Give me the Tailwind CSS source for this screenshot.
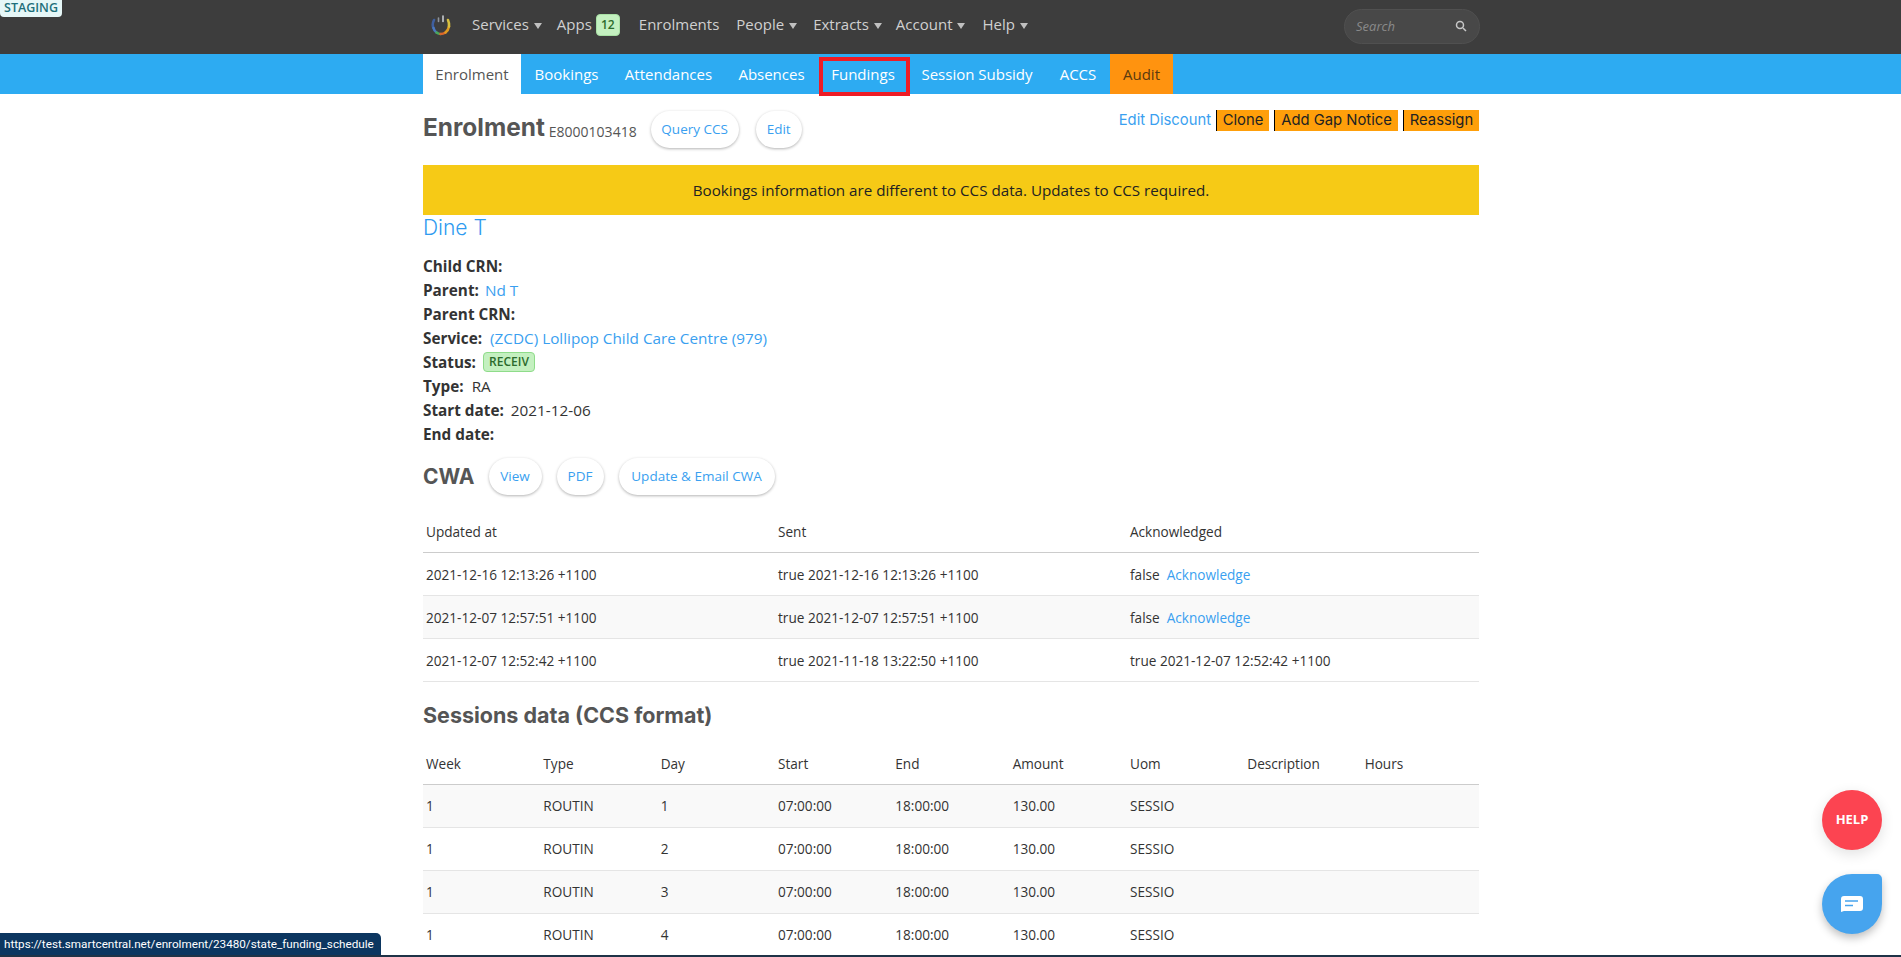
<!DOCTYPE html>
<html lang="en">
<head>
  <meta charset="UTF-8" />
  <title>Enrolment</title>
  <script src="https://cdn.jsdelivr.net/npm/@tailwindcss/browser@4"></script>
</head>
<body class="h-[957px] overflow-hidden bg-white text-[15.3px] text-[#333] font-['Open_Sans',sans-serif]">

  <!-- Top nav -->
  <nav class="h-[54px] bg-[#3d3d3d]">
    <div class="w-[1056px] ml-[423px] h-full flex items-center pb-[5px] text-[15px] text-[#d0d0d0]">
      <svg class="ml-[8px] mr-[21px]" width="20" height="22" viewBox="0 0 20 22" fill="none" stroke-width="2.6" stroke-linecap="round">
        <path d="M3 6 C1.5 9 1.5 12 2.5 14" stroke="#3f5f9f"/>
        <path d="M2.5 14 C3 16 4 17.5 5.5 18.5" stroke="#4a78c0"/>
        <path d="M5.5 18.5 C7 19.6 8 20 9.5 20" stroke="#4aa85a"/>
        <path d="M9.5 20 C11.5 20 13 19.5 14.5 18.5" stroke="#d8662a"/>
        <path d="M14.5 18.5 C16.5 17 17.5 15 18 12.5" stroke="#e09a20"/>
        <path d="M18 12.5 C18.2 10 18 8 17 6" stroke="#d8c040"/>
        <path d="M7.5 4 V7.5" stroke="#8f949b" stroke-width="1.6"/>
        <path d="M12 2 V7.5" stroke="#c8ccd0" stroke-width="1.6"/>
      </svg>
      <a class="flex items-center">Services<svg class="ml-[5px] mt-[2px]" width="8" height="6" viewBox="0 0 8 6" fill="#c0c0c0"><path d="M0 0 H8 L4 6 Z"/></svg></a>
      <a class="ml-[15px]">Apps</a>
      <span class="ml-[4px] w-[24px] h-[22px] flex items-center justify-center rounded-[4px] bg-[#c4f0c0] border border-[#a8e0a4] text-[#2c6b2c] text-[12px] font-semibold">12</span>
      <a class="ml-[19px]">Enrolments</a>
      <a class="ml-[17px] flex items-center">People<svg class="ml-[5px] mt-[2px]" width="8" height="6" viewBox="0 0 8 6" fill="#c0c0c0"><path d="M0 0 H8 L4 6 Z"/></svg></a>
      <a class="ml-[16px] flex items-center">Extracts<svg class="ml-[5px] mt-[2px]" width="8" height="6" viewBox="0 0 8 6" fill="#c0c0c0"><path d="M0 0 H8 L4 6 Z"/></svg></a>
      <a class="ml-[14px] flex items-center">Account<svg class="ml-[5px] mt-[2px]" width="8" height="6" viewBox="0 0 8 6" fill="#c0c0c0"><path d="M0 0 H8 L4 6 Z"/></svg></a>
      <a class="ml-[17px] flex items-center">Help<svg class="ml-[5px] mt-[2px]" width="8" height="6" viewBox="0 0 8 6" fill="#c0c0c0"><path d="M0 0 H8 L4 6 Z"/></svg></a>
      <div class="ml-auto -mr-[1px] w-[136px] h-[35px] mt-[3px] rounded-full bg-[#484848] border border-[#505050] flex items-center justify-between pl-[11px] pr-[12px]">
        <span class="italic text-[13px] text-[#8a8a8a] mt-[1px]">Search</span>
        <svg width="12" height="12" viewBox="0 0 12 12" fill="none" stroke="#c8c8c8" stroke-width="1.5">
          <circle cx="5" cy="5" r="3.5"/><path d="M8 8 L11 11"/>
        </svg>
      </div>
    </div>
  </nav>

  <!-- Sub nav -->
  <div class="h-10 bg-[#2dabf2]">
    <div class="w-[1056px] ml-[423px] h-full flex text-[15px] text-white">
      <a class="w-[98px] flex items-center justify-center bg-white text-[#555]">Enrolment</a>
      <a class="w-[91px] flex items-center justify-center">Bookings</a>
      <a class="w-[113px] flex items-center justify-center">Attendances</a>
      <a class="w-[93px] flex items-center justify-center">Absences</a>
      <a class="w-[90px] flex items-center justify-center">Fundings</a>
      <a class="w-[138px] flex items-center justify-center">Session Subsidy</a>
      <a class="w-[64px] flex items-center justify-center">ACCS</a>
      <a class="w-[63px] flex items-center justify-center bg-[#ff930f] text-[#5a3a10]">Audit</a>
    </div>
  </div>

  <main class="w-[1056px] ml-[423px]">
    <!-- Title row -->
    <div class="h-[71px] flex items-start justify-between">
      <div class="flex items-center mt-[17px]">
        <h1 class="text-[24.4px] leading-[32px] -mt-[5px] font-bold text-[#555] font-['Inter',sans-serif]">Enrolment</h1>
        <span class="ml-[4px] mt-[3px] text-[14px] text-[#555]">E8000103418</span>
        <a class="ml-[14px] h-[37px] w-[88px] flex items-center justify-center rounded-full bg-white shadow-[0_1px_3px_rgba(0,0,0,0.3)] text-[13.5px] text-[#3a9ff0]">Query CCS</a>
        <a class="ml-[17px] h-[37px] w-[46px] flex items-center justify-center rounded-full bg-white shadow-[0_1px_3px_rgba(0,0,0,0.3)] text-[13.5px] text-[#3a9ff0]">Edit</a>
      </div>
      <div class="flex items-center mt-[16px] h-[21px] text-[14.8px] font-['Inter',sans-serif]">
        <a class="text-[#3a9ff0]">Edit Discount</a>
        <a class="ml-[5px] h-full w-[53px] flex items-center justify-center bg-[#ff9f0a] border-l border-black text-[#222]">Clone</a>
        <a class="ml-[5px] h-full w-[124px] flex items-center justify-center bg-[#ff9f0a] border-l border-black text-[#222]">Add Gap Notice</a>
        <a class="ml-[5px] h-full w-[76px] flex items-center justify-center bg-[#ff9f0a] border-l border-black text-[#222]">Reassign</a>
      </div>
    </div>

    <!-- Alert -->
    <div class="h-[50px] bg-[#f6ca16] flex items-center justify-center text-[15.2px] text-[#222]">Bookings information are different to CCS data. Updates to CCS required.</div>

    <a class="block h-[24px] mt-[1px] text-[21px] leading-[24px] font-light text-[#2f9bf0] font-['Inter',sans-serif]">Dine T</a>

    <!-- Details -->
    <div class="mt-[14px] leading-[24px]">
      <div><b class="font-bold">Child CRN:</b></div>
      <div><b class="font-bold">Parent:</b><a class="ml-[6px] text-[#3a9ff0]">Nd T</a></div>
      <div><b class="font-bold">Parent CRN:</b></div>
      <div><b class="font-bold">Service:</b><a class="ml-[8px] text-[#3a9ff0]">(ZCDC) Lollipop Child Care Centre (979)</a></div>
      <div class="flex items-center"><b class="font-bold">Status:</b><span class="ml-[7px] h-[20px] w-[52px] flex items-center justify-center rounded-[4px] bg-[#c4f0c0] border border-[#8fdc8a] text-[#2c6b2c] text-[12px] font-semibold">RECEIV</span></div>
      <div><b class="font-bold">Type:</b><span class="ml-[8px]">RA</span></div>
      <div><b class="font-bold">Start date:</b><span class="ml-[7px]">2021-12-06</span></div>
      <div><b class="font-bold">End date:</b></div>
    </div>

    <!-- CWA -->
    <div class="mt-[12px] h-[37px] flex items-center">
      <h2 class="text-[21px] font-bold text-[#555] font-['Inter',sans-serif]">CWA</h2>
      <a class="ml-[14px] h-[37px] w-[53px] flex items-center justify-center rounded-full bg-white shadow-[0_1px_3px_rgba(0,0,0,0.3)] text-[13.5px] text-[#3a9ff0]">View</a>
      <a class="ml-[15px] h-[37px] w-[47px] flex items-center justify-center rounded-full bg-white shadow-[0_1px_3px_rgba(0,0,0,0.3)] text-[13.5px] text-[#3a9ff0]">PDF</a>
      <a class="ml-[15px] h-[37px] w-[156px] flex items-center justify-center rounded-full bg-white shadow-[0_1px_3px_rgba(0,0,0,0.3)] text-[13.5px] text-[#3a9ff0]">Update &amp; Email CWA</a>
    </div>

    <table class="mt-[14px] w-full table-fixed text-[13.6px] text-left">
      <thead>
        <tr class="h-[43px] border-b border-[#ccc]">
          <th class="px-[3px] pt-[3px] font-medium">Updated at</th><th class="px-[3px] pt-[3px] font-medium">Sent</th><th class="px-[3px] pt-[3px] font-medium">Acknowledged</th>
        </tr>
      </thead>
      <tbody>
        <tr class="h-[43px] border-b border-[#e5e5e5]">
          <td class="px-[3px] pt-[4px]">2021-12-16 12:13:26 +1100</td><td class="px-[3px] pt-[4px]">true 2021-12-16 12:13:26 +1100</td><td class="px-[3px] pt-[4px]">false<a class="ml-[7px] text-[#3a9ff0]">Acknowledge</a></td>
        </tr>
        <tr class="h-[43px] border-b border-[#e5e5e5] bg-[#f9f9f9]">
          <td class="px-[3px] pt-[4px]">2021-12-07 12:57:51 +1100</td><td class="px-[3px] pt-[4px]">true 2021-12-07 12:57:51 +1100</td><td class="px-[3px] pt-[4px]">false<a class="ml-[7px] text-[#3a9ff0]">Acknowledge</a></td>
        </tr>
        <tr class="h-[43px] border-b border-[#e5e5e5]">
          <td class="px-[3px] pt-[4px]">2021-12-07 12:52:42 +1100</td><td class="px-[3px] pt-[4px]">true 2021-11-18 13:22:50 +1100</td><td class="px-[3px] pt-[4px]">true 2021-12-07 12:52:42 +1100</td>
        </tr>
      </tbody>
    </table>

    <h2 class="mt-[17px] h-[32px] text-[21.5px] leading-[32px] font-bold text-[#555] font-['Inter',sans-serif]">Sessions data (CCS format)</h2>

    <table class="mt-[11px] w-full table-fixed text-[13.6px] text-left">
      <thead>
        <tr class="h-[43px] border-b border-[#ccc]">
          <th class="px-[3px] pt-[3px] font-medium">Week</th><th class="px-[3px] pt-[3px] font-medium">Type</th><th class="px-[3px] pt-[3px] font-medium">Day</th><th class="px-[3px] pt-[3px] font-medium">Start</th><th class="px-[3px] pt-[3px] font-medium">End</th><th class="px-[3px] pt-[3px] font-medium">Amount</th><th class="px-[3px] pt-[3px] font-medium">Uom</th><th class="px-[3px] pt-[3px] font-medium">Description</th><th class="px-[3px] pt-[3px] font-medium">Hours</th>
        </tr>
      </thead>
      <tbody>
        <tr class="h-[43px] border-b border-[#e5e5e5] bg-[#f9f9f9]">
          <td class="px-[3px]">1</td><td class="px-[3px]">ROUTIN</td><td class="px-[3px]">1</td><td class="px-[3px]">07:00:00</td><td class="px-[3px]">18:00:00</td><td class="px-[3px]">130.00</td><td class="px-[3px]">SESSIO</td><td></td><td></td>
        </tr>
        <tr class="h-[43px] border-b border-[#e5e5e5]">
          <td class="px-[3px]">1</td><td class="px-[3px]">ROUTIN</td><td class="px-[3px]">2</td><td class="px-[3px]">07:00:00</td><td class="px-[3px]">18:00:00</td><td class="px-[3px]">130.00</td><td class="px-[3px]">SESSIO</td><td></td><td></td>
        </tr>
        <tr class="h-[43px] border-b border-[#e5e5e5] bg-[#f9f9f9]">
          <td class="px-[3px]">1</td><td class="px-[3px]">ROUTIN</td><td class="px-[3px]">3</td><td class="px-[3px]">07:00:00</td><td class="px-[3px]">18:00:00</td><td class="px-[3px]">130.00</td><td class="px-[3px]">SESSIO</td><td></td><td></td>
        </tr>
        <tr class="h-[43px] border-b border-[#e5e5e5]">
          <td class="px-[3px]">1</td><td class="px-[3px]">ROUTIN</td><td class="px-[3px]">4</td><td class="px-[3px]">07:00:00</td><td class="px-[3px]">18:00:00</td><td class="px-[3px]">130.00</td><td class="px-[3px]">SESSIO</td><td></td><td></td>
        </tr>
      </tbody>
    </table>
  </main>

  <!-- Overlays -->
  <div class="absolute left-0 top-0 h-[17px] w-[62px] rounded-b-[4px] bg-[#e6f7f7] text-[#1d6f7a] text-[12.5px] leading-[15px] font-semibold text-center">STAGING</div>

  <div class="absolute left-[819px] top-[57px] w-[91px] h-[39px] border-4 border-[#ee1c25]"></div>

  <div class="absolute left-[1822px] top-[790px] w-[60px] h-[60px] rounded-full bg-[#fc4451] shadow-[0_4px_14px_rgba(0,0,0,0.12)] flex items-center justify-center text-white text-[13px] font-bold">HELP</div>

  <div class="absolute left-[1822px] top-[874px] w-[60px] h-[60px] rounded-[30px] rounded-tr-[5px] bg-[#46a4ee] shadow-[0_4px_8px_rgba(0,0,0,0.25)] flex items-center justify-center">
    <svg width="24" height="18" viewBox="0 0 24 18">
      <path d="M4 1 H20 A3 3 0 0 1 23 4 V13 A3 3 0 0 1 20 16 H4 L1 17 V4 A3 3 0 0 1 4 1 Z" fill="#fff"/>
      <path d="M5 6 H18 M5 10.5 H13" stroke="#46a4ee" stroke-width="1.6"/>
    </svg>
  </div>

  <div class="absolute left-0 top-[933px] h-[22px] w-[381px] rounded-tr-[5px] bg-[#0c3660] text-white text-[11.7px] leading-[22px] pl-[4px] whitespace-nowrap font-['Roboto',sans-serif]">https://test.smartcentral.net/enrolment/23480/state_funding_schedule</div>
  <div class="absolute left-0 top-[955px] w-full h-[2px] bg-[#1f3347]"></div>

</body>
</html>
